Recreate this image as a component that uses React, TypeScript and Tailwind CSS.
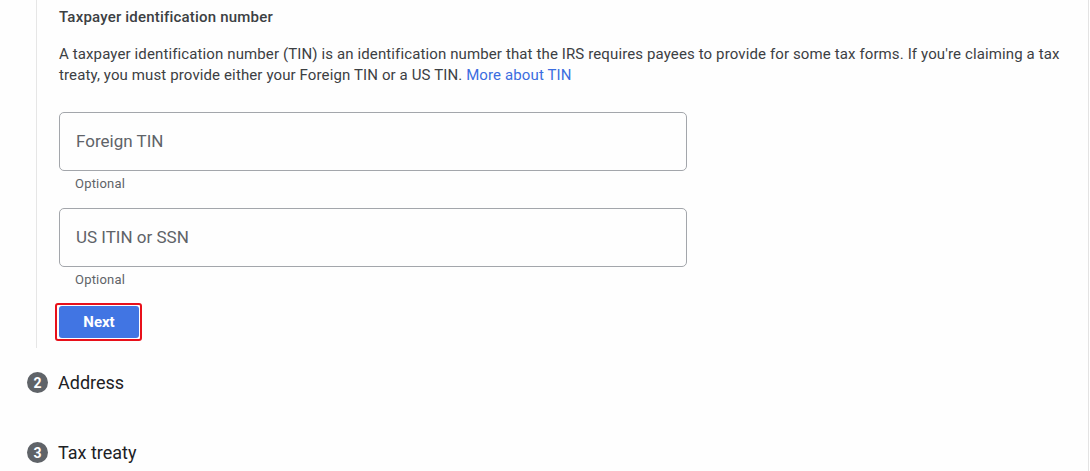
import React from 'react';

const Field: React.FC<{ label: string }> = ({ label }) => (
  <div>
    <div className="h-[59px] w-[628px] rounded-[5px] border border-[#a3a6ab] flex items-center px-4">
      <span className="text-[17px] text-[#5f6368]">{label}</span>
    </div>
    <div className="pl-4 pt-[5px] text-[13px] leading-[16px] text-[#5f6368] tracking-[0.2px]">Optional</div>
  </div>
);

const Step: React.FC<{ n: number; label: string }> = ({ n, label }) => (
  <div className="flex items-center gap-[10px] pl-[27px]">
    <span className="w-[21px] h-[21px] rounded-full bg-[#5f6368] text-white text-[14px] font-bold flex items-center justify-center leading-none">
      {n}
    </span>
    <span className="text-[18px] text-[#202124]">{label}</span>
  </div>
);

const App: React.FC = () => {
  return (
    <div className="w-[1090px] h-[471px] bg-white overflow-hidden font-['Roboto',sans-serif]">
      <div className="w-[1089px] h-full border-r border-[#e3e3e3] bg-[#fefefe]">
        {/* Active step body */}
        <div className="ml-[36px] border-l border-[#e6e6e6] h-[348px] pl-[22px] pt-[7px]">
          <h3 className="text-[15px] leading-[20px] font-medium text-[#3c4043] tracking-[0.2px]">Taxpayer identification number</h3>
          <p className="mt-[17px] text-[15px] leading-[21px] text-[#3c4043] tracking-[0.12px] w-[1015px]">
            A taxpayer identification number (TIN) is an identification number that the IRS requires payees to provide for some tax forms. If you're claiming a tax treaty, you must provide either your Foreign TIN or a US TIN.{' '}
            <span className="text-[#3b6de0]">More about TIN</span>
          </p>
          <div className="mt-[26px] flex flex-col gap-[16px]">
            <Field label="Foreign TIN" />
            <Field label="US ITIN or SSN" />
          </div>
          <div className="mt-[15px] -ml-[4px] w-[87px] h-[38px] border-2 border-[#e8101a] rounded-[3px] p-px pl-[2px]">
            <button className="w-full h-full bg-[#4175e3] rounded-[3px] text-white text-[15px] font-bold">Next</button>
          </div>
        </div>
        <div className="mt-[21px]">
          <Step n={2} label="Address" />
        </div>
        <div className="mt-[43px]">
          <Step n={3} label="Tax treaty" />
        </div>
      </div>
    </div>
  );
};

export default App;
